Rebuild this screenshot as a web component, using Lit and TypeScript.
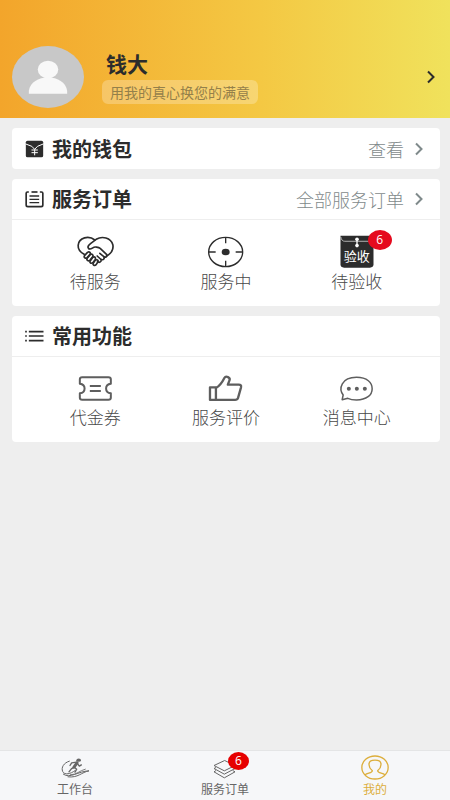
import { LitElement, html, css, svg } from "lit";
import { customElement } from "lit/decorators.js";

const chevron = html`<svg class="chevron" viewBox="0 0 8 14" aria-hidden="true">
  <path d="M1 1.500 L6.500 7 L1 12.500" fill="none" stroke="currentColor" stroke-width="2" />
</svg>`;

const icon = (name: string, viewBox: string, body: unknown) =>
  html`<svg class="icon ${name}" viewBox=${viewBox} aria-hidden="true">${body}</svg>`;

const wallet = icon("head-icon", "77 43 56 54", svg`
  <rect x="79" y="45" width="52" height="50" rx="5" fill="currentColor" />
  <path d="M79 55 L97 62 M131 55 L114 62" stroke="#fff" stroke-width="3" fill="none" />
  <path d="M97 62 L105.500 71 L114 62 M105.500 71 V89 M96 73 H115 M96 81 H115" stroke="#fff" stroke-width="3" fill="none" />`);

const orders = icon("head-icon", "77 198 56 54", svg`
  <g fill="none" stroke="currentColor" stroke-width="5">
    <path d="M88 204 H84 Q80 204 80 208 V243 Q80 248 85 248 H125 Q130 248 130 243 V208 Q130 204 126 204 H121" />
    <path d="M96 204 H114" />
    <path d="M90 216 H119 M90 226 H119 M90 236 H119" stroke-width="4" />
  </g>`);

const list = icon("head-icon", "77 50 56 54", svg`
  <path d="M88 64 H132 M88 77 H132 M88 91 H132" stroke="currentColor" stroke-width="5" />
  <path d="M77 64 H82 M77 77 H82 M77 91 H82" stroke="currentColor" stroke-width="5" />`);

const handshake = icon("heart", "48 32 116 96", svg`
  <g fill="none" stroke="currentColor" stroke-width="5" stroke-linecap="round" stroke-linejoin="round">
    <path d="M72 87 C60 80 53 72 54 60 C56 36 86 30 104 44" />
    <path d="M86 70 C80 65 86 59 92 54 L108 42 C126 31 152 37 158 58 C161 74 150 86 139 92" />
    <path d="M86 70 C93 75 98 64 106 65 C112 66 116 66 120 69 L139 87 C143 93 136 98 131 94 L119 84" />
    <path d="M131 94 C135 101 127 106 121 101 L111 92 M123 103 C124 110 117 113 112 109" />
    <path d="M73 91 L82 81 C88 77 93 83 89 88 L81 97 C76 101 70 96 73 91 Z" />
    <path d="M81 99 L90 88 C96 84 101 90 97 95 L89 105 C84 109 78 104 81 99 Z" />
    <path d="M90 107 L98 96 C104 92 108 98 105 103 L98 112 C93 116 87 112 90 107 Z" />
    <path d="M99 114 L105 105 C110 101 116 105 113 110 L108 118 C103 123 97 119 99 114 Z" />
  </g>`);

const target = icon("target", "51 32 114 96", svg`
  <ellipse cx="107" cy="80" rx="51" ry="44" fill="none" stroke="currentColor" stroke-width="4" />
  <ellipse cx="107" cy="80" rx="12" ry="10" fill="currentColor" />
  <path d="M107 36 V54 M107 106 V124 M56 80 H77 M137 80 H158" stroke="currentColor" stroke-width="4" />`);

const pouch = icon("pouch", "57 29 102 100", svg`
  <path d="M58 31 H158 V118 Q158 128 147 128 H69 Q58 128 58 118 Z" fill="currentColor" />
  <path d="M59 35 Q61 48 71 48 H144 Q154 48 157 38" stroke="#ccc" stroke-width="2.500" fill="none" />
  <path d="M108 42 V62" stroke="#fff" stroke-width="4" />
  <circle cx="108" cy="42" r="5.500" fill="#fff" />
  <circle cx="108" cy="61" r="5.500" fill="#fff" />`);

const ticket = icon("ticket", "234 190 104 84", svg`
  <g fill="none" stroke="currentColor" stroke-width="6" stroke-linejoin="round">
    <path d="M246 200 H325 Q332 200 332 206 V219 C313 221 313 246 332 248 V261 Q332 267 325 267 H246 Q239 267 239 261 V248 C258 246 258 221 239 219 V206 Q239 200 246 200 Z" />
    <path d="M269 226 H302 M269 241 H302" />
  </g>`);

const thumb = icon("thumb", "54 25 106 84", svg`
  <g fill="none" stroke="currentColor" stroke-width="7" stroke-linejoin="round">
    <path d="M60 65 H78 V103 H60 Z" />
    <path d="M78 67 C90 61 98 48 104 36 C108 29 123 35 119 44 L114 57 H147 Q156 57 154 65 L145 97 Q143 103 136 103 H78" />
  </g>`);

const message = icon("message", "446 25 104 84", svg`
  <path d="M458 88 C444 69 452 35 498 35 C530 35 545 51 545 69 C545 88 528 103 498 103 C486 103 478 101 472 98 L455 102 Z" fill="none" stroke="currentColor" stroke-width="4.500" stroke-linejoin="round" />
  <circle cx="475" cy="69" r="6" fill="currentColor" />
  <circle cx="499" cy="69" r="6" fill="currentColor" />
  <circle cx="523" cy="69" r="6" fill="currentColor" />`);

const runner = icon("tab-icon", "57 30 90 72", svg`
  <g fill="none" stroke="currentColor" stroke-linecap="round" stroke-linejoin="round">
    <path d="M85 47 C68 52 60 66 65 78 C71 90 89 85 101 76" stroke-width="3" />
    <path d="M67 86 C86 101 112 77 144 76 C122 80 111 98 81 94" stroke-width="3" />
    <path d="M88 88 C107 88 116 75 133 71" stroke-width="2.500" />
    <path d="M108 52 L99 65" stroke-width="9" />
    <path d="M106 50 L92 52 L87 60 M109 54 L115 62 L121 58 M99 65 L91 70 L84 79 M101 66 L107 71 L102 80" stroke-width="4" />
  </g>
  <ellipse cx="113" cy="44" rx="7" ry="5" fill="currentColor" />`);

const layers = icon("tab-icon", "64 30 90 72", svg`
  <g fill="none" stroke="currentColor" stroke-width="3" stroke-linejoin="round">
    <path d="M108 45 L76 60 L107 76 L139 60 Z" />
    <path d="M82 66 L76 69 L107 86 L139 69 L132 66" />
    <path d="M82 75 L76 79 L107 97 L139 79 L132 75" />
  </g>`);

const person = icon("tab-icon", "60 30 90 76", svg`
  <g fill="none" stroke="currentColor" stroke-width="4" stroke-linejoin="round">
    <ellipse cx="105" cy="68" rx="40" ry="35" />
    <path d="M75 90 C82 84 96 86 97 78 C89 71 86 64 87 57 C87 42 123 42 123 57 C124 64 121 71 113 78 C114 86 128 84 135 90" />
  </g>`);

@customElement("app-root")
export class AppRoot extends LitElement {
  static styles = css`
    :host {
      display: flex;
      flex-direction: column;
      min-height: 100vh;
      background: #eeeeee;
      color: #2c2c2c;
      font-family: "Noto Sans CJK SC", sans-serif;
    }
    * { box-sizing: border-box; }
    button, a {
      font: inherit;
      color: inherit;
      text-decoration: none;
      border: 0;
      margin: 0;
      padding: 0;
      background: none;
      cursor: pointer;
    }
    h1, h2, p { margin: 0; }
    svg { display: block; flex: none; overflow: visible; }
    .profile {
      display: flex;
      align-items: center;
      width: 100%;
      padding: 46px 15px 10px 12px;
      text-align: left;
      background: linear-gradient(90deg, #f3a52b, #f4c843 58%, #f0e25c);
    }
    .avatar { width: 72px; height: 62px; }
    .who {
      flex: 1;
      display: flex;
      flex-direction: column;
      align-items: flex-start;
      gap: 4px;
      padding-left: 18px;
    }
    .name { font-size: 21px; line-height: 26px; font-weight: 700; padding-left: 4px; }
    .slogan {
      font-size: 14px;
      line-height: 24px;
      padding: 0 8px;
      border-radius: 6px;
      color: #94804a;
      background: rgba(255, 255, 255, 0.25);
    }
    .chevron { width: 8px; height: 14px; }
    main {
      flex: 1;
      display: flex;
      flex-direction: column;
      gap: 10px;
      padding: 10px 10px 10px 12px;
    }
    .card { background: #fff; border-radius: 4px; }
    .head {
      display: flex;
      align-items: center;
      justify-content: space-between;
      height: 41px;
      padding: 0 17px 0 13px;
    }
    .head.ruled { border-bottom: 1px solid #eeeeee; }
    .title { display: flex; align-items: center; gap: 8px; }
    .title h2 { font-size: 20px; line-height: 24px; font-weight: 700; }
    .head-icon { width: 19px; height: 18px; }
    .more {
      display: flex;
      align-items: center;
      gap: 11px;
      font-size: 18px;
      line-height: 24px;
      font-weight: 300;
      color: #7f8a8b;
    }
    .grid {
      display: grid;
      grid-template-columns: repeat(3, 1fr);
      padding: 15px 18px 13px;
    }
    .grid.soft { padding-top: 14px; }
    .item {
      display: flex;
      flex-direction: column;
      align-items: center;
      gap: 1px;
      font-size: 17px;
      line-height: 24px;
      font-weight: 300;
      color: #484848;
    }
    .art {
      position: relative;
      display: flex;
      align-items: center;
      justify-content: center;
      height: 33px;
      color: #2c2c2c;
    }
    .soft .art { color: #5e5e5e; }
    .heart { width: 39px; height: 32px; }
    .target { width: 38px; height: 32px; }
    .pouch { width: 34px; height: 33px; }
    .ticket, .thumb, .message { width: 35px; height: 28px; }
    .stamp {
      position: absolute;
      inset: 12px 0 auto 0;
      text-align: center;
      font-size: 13px;
      line-height: 18px;
      font-weight: 400;
      color: #fff;
    }
    .badge {
      position: absolute;
      border-radius: 50%;
      text-align: center;
      font-family: "Open Sans", sans-serif;
      font-weight: 400;
      font-size: 12px;
      color: #fff;
      background: #e50a1e;
    }
    .art .badge { left: 28px; top: -5px; width: 24px; height: 20px; line-height: 20px; }
    .tabs {
      display: grid;
      grid-template-columns: repeat(3, 1fr);
      padding: 4px 0 2px;
      border-top: 1px solid #e4e5e6;
      background: #f6f7f9;
    }
    .tab {
      display: flex;
      flex-direction: column;
      align-items: center;
      font-size: 12px;
      line-height: 18px;
      color: #666;
    }
    .tab.current { color: #dcae3c; }
    .tab-art { position: relative; }
    .tab-icon { width: 30px; height: 25px; }
    .tab-art .badge { left: 18px; top: -3px; width: 21px; height: 18px; line-height: 18px; background: #e60000; }
  `;

  private item(art: unknown, label: string) {
    return html`<button class="item" type="button"><span class="art">${art}</span><span>${label}</span></button>`;
  }

  private tab(art: unknown, label: string, current = false) {
    return html`<a class="tab ${current ? "current" : ""}" href="#"><span class="tab-art">${art}</span><span>${label}</span></a>`;
  }

  render() {
    return html`
      <button class="profile" type="button">
        <svg class="avatar" viewBox="36 139 218 187" aria-hidden="true">
          <ellipse cx="145" cy="232.500" rx="109" ry="93.500" fill="#c8c8c8" />
          <ellipse cx="145" cy="210" rx="31" ry="27" fill="#f8f8f8" />
          <path d="M87 283 V274 C91 248 116 234 145 234 C174 234 199 248 203 274 V283 Z" fill="#f8f8f8" />
        </svg>
        <span class="who">
          <span class="name">钱大</span>
          <span class="slogan">用我的真心换您的满意</span>
        </span>
        ${chevron}
      </button>
      <main>
        <section class="card">
          <div class="head">
            <div class="title">${wallet}<h2>我的钱包</h2></div>
            <a class="more" href="#">查看${chevron}</a>
          </div>
        </section>
        <section class="card">
          <div class="head ruled">
            <div class="title">${orders}<h2>服务订单</h2></div>
            <a class="more" href="#">全部服务订单${chevron}</a>
          </div>
          <div class="grid">
            ${this.item(handshake, "待服务")}
            ${this.item(target, "服务中")}
            ${this.item(html`${pouch}<span class="stamp">验收</span><span class="badge">6</span>`, "待验收")}
          </div>
        </section>
        <section class="card">
          <div class="head ruled">
            <div class="title">${list}<h2>常用功能</h2></div>
          </div>
          <div class="grid soft">
            ${this.item(ticket, "代金券")}
            ${this.item(thumb, "服务评价")}
            ${this.item(message, "消息中心")}
          </div>
        </section>
      </main>
      <nav class="tabs">
        ${this.tab(runner, "工作台")}
        ${this.tab(html`${layers}<span class="badge">6</span>`, "服务订单")}
        ${this.tab(person, "我的", true)}
      </nav>
    `;
  }
}
